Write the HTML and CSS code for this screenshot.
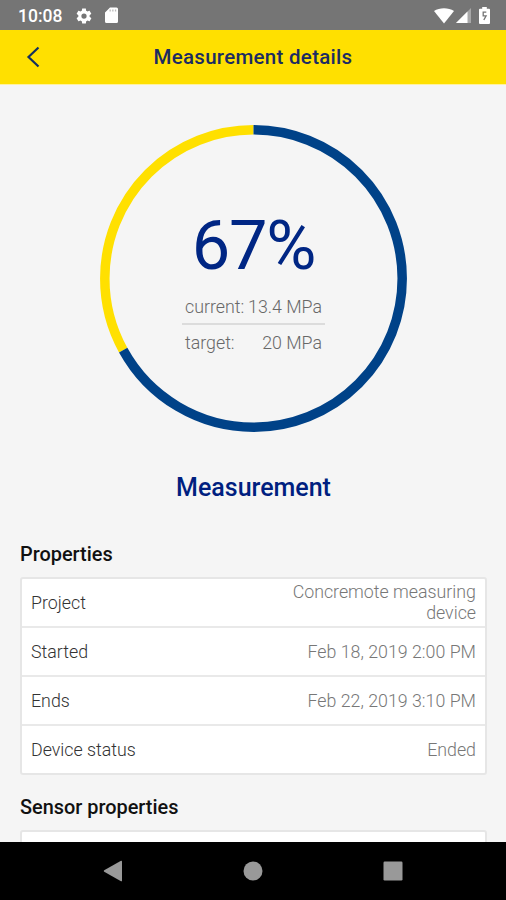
FILE: index.html
```html
<!DOCTYPE html>
<html lang="en">
<head>
<meta charset="utf-8">
<title>Measurement details</title>
<link rel="stylesheet" href="styles.css">
</head>
<body>
	<div id="screen">
		<div class="status-bar">
			<span class="clock">10:08</span>
			<svg class="gear" width="18" height="18" viewBox="0 0 24 24"><path fill="#fff" d="M19.4 13c0-.3.1-.6.1-1s0-.7-.1-1l2.1-1.600c.2-.2.300-.4.100-.7l-2-3.400c-.1-.2-.4-.3-.6-.2l-2.500 1c-.5-.4-1.100-.7-1.700-1L14.500 2.400c0-.2-.2-.4-.5-.4h-4c-.3 0-.5.2-.5.4l-.4 2.700c-.6.2-1.100.6-1.700 1l-2.500-1c-.2-.1-.5 0-.6.2l-2 3.400c-.1.2-.1.500.1.700L4.500 11c0 .3-.1.600-.1 1s0 .7.1 1l-2.100 1.600c-.2.2-.2.4-.1.700l2 3.400c.1.200.4.300.6.200l2.500-1c.5.4 1.100.7 1.700 1l.4 2.700c0 .2.200.4.500.4h4c.3 0 .5-.2.5-.4l.4-2.700c.6-.3 1.100-.6 1.700-1l2.500 1c.2.100.5 0 .6-.2l2-3.400c.1-.2.100-.5-.1-.7zM12 15.500a3.500 3.500 0 1 1 0-7 3.500 3.500 0 0 1 0 7z"/></svg>
			<svg class="card-icon" width="15" height="17" viewBox="0 0 15 17"><path fill="#fff" fill-rule="evenodd" d="M6 .5h6.500A1.500 1.500 0 0 1 14 2v12.500a1.500 1.500 0 0 1-1.500 1.500h-10A1.500 1.500 0 0 1 1 14.500V5.500z"/><path fill="#bbb" d="M5.500 2.500v2h1.300v-2zM8.200 2.500v2h1.300v-2zM10.900 2.500v2h1.300v-2z"/></svg>
			<svg class="wifi" width="20" height="16" viewBox="0 0 20 16"><path fill="#fff" d="M0 3C5.500-.8 14.500-.8 20 3L10 15.500z"/></svg>
			<svg class="signal" width="15" height="15" viewBox="0 0 15 15"><path fill="#a8a8a8" d="M15 0v15H0z"/><path fill="#fff" d="M11.500 3.500V15H0z"/></svg>
			<svg class="battery" width="11" height="17" viewBox="0 0 11 17"><path fill="#fff" d="M3.200 0h4.600v1.800H10a1 1 0 0 1 1 1V16a1 1 0 0 1-1 1H1a1 1 0 0 1-1-1V2.800a1 1 0 0 1 1-1h2.200z"/><path fill="none" stroke="#757575" stroke-width="1.300" d="M7.300 5.200H4.200v3.600h2.900L4.800 13"/></svg>
		</div>
		<div class="header">
			<svg class="back" width="14" height="22" viewBox="0 0 14 22"><path fill="none" stroke="#14305f" stroke-width="2.200" d="M12.500 1.500L2.500 11l10 9.500"/></svg>
			<h1>Measurement details</h1>
		</div>
		<div class="content">
			<div class="progress">
				<svg class="ring" width="308" height="308" viewBox="0 0 308 308">
					<circle cx="153.500" cy="154.500" r="148.700" fill="none" stroke="#ffe000" stroke-width="9.500" pathLength="100" stroke-dasharray="33 67" stroke-dashoffset="-67" transform="rotate(-90 153.500 154.500)"/>
					<circle cx="153.500" cy="154.500" r="148.700" fill="none" stroke="#004288" stroke-width="9.500" pathLength="100" stroke-dasharray="67 33" transform="rotate(-90 153.500 154.500)"/>
				</svg>
				<div class="percent">67%</div>
				<div class="values">
					<div class="value"><span>current:</span><span>13.4 MPa</span></div>
					<div class="value"><span>target:</span><span>20 MPa</span></div>
				</div>
			</div>
			<h2>Measurement</h2>
			<h3>Properties</h3>
			<div class="list">
				<div class="row"><span class="label">Project</span><span class="data">Concremote measuring device</span></div>
				<div class="row"><span class="label">Started</span><span class="data">Feb 18, 2019 2:00 PM</span></div>
				<div class="row"><span class="label">Ends</span><span class="data">Feb 22, 2019 3:10 PM</span></div>
				<div class="row"><span class="label">Device status</span><span class="data">Ended</span></div>
			</div>
			<h3>Sensor properties</h3>
			<div class="list">
				<div class="row"></div>
			</div>
		</div>
		<div class="nav-bar">
			<svg width="20" height="22" viewBox="0 0 20 22"><path fill="#999" d="M18 .8q1-.4 1 .8v18.800q0 1.200-1 .8L1.200 11.700q-1-.7 0-1.400z"/></svg>
			<svg width="20" height="20" viewBox="0 0 20 20"><circle cx="10" cy="10" r="9.500" fill="#999"/></svg>
			<svg width="20" height="20" viewBox="0 0 20 20"><rect x=".5" y=".5" width="19" height="19" rx="1.200" fill="#999"/></svg>
		</div>
	</div>
</body>
</html>
```

FILE: styles.css
```css
body {
	margin: 0;
	font-family: Roboto, sans-serif;
}
#screen {
	width: 506px;
	height: 900px;
	display: flex;
	flex-direction: column;
	overflow: hidden;
	background: #f5f5f5;
}
.status-bar {
	flex: none;
	box-sizing: border-box;
	height: 30px;
	padding: 1px 16px 0 18px;
	display: flex;
	align-items: center;
	background: #757575;
}
.clock {
	width: 57px;
	color: #fff;
	font-size: 17.5px;
	font-weight: 500;
}
.card-icon {
	margin-left: 11px;
}
.wifi {
	margin-left: auto;
}
.signal {
	margin-left: 2px;
}
.battery {
	margin-left: 8px;
}
.header {
	flex: none;
	height: 54px;
	padding: 0 26px;
	display: grid;
	grid-template-columns: 14px 1fr 14px;
	align-items: center;
	background: #ffe000;
	border-bottom: 1px solid #fff2a0;
}
.header h1 {
	margin: 0;
	text-align: center;
	color: #1c2c62;
	font-size: 20.5px;
	font-weight: 500;
	letter-spacing: 0.28px;
}
.content {
	flex: 1;
	min-height: 0;
	padding: 39px 19px 0 20px;
	overflow: hidden;
}
.progress {
	width: 308px;
	height: 308px;
	margin: 0 auto;
	display: grid;
	grid-template-rows: 164px 1fr;
	justify-items: center;
}
/* ring sits behind the numbers */
.ring {
	grid-area: 1 / 1 / 3 / 2;
}
.percent {
	grid-area: 1 / 1;
	align-self: end;
	line-height: 84px;
	color: #002684;
	font-size: 68.5px;
	letter-spacing: -1.2px;
}
.values {
	grid-area: 2 / 1;
	width: 143px;
}
.value {
	height: 35px;
	padding: 1px 3px 0;
	box-sizing: border-box;
	display: flex;
	justify-content: space-between;
	align-items: center;
	color: #686868;
	font-size: 17.8px;
	font-weight: 300;
}
.value + .value {
	height: 36px;
	border-top: 2px solid #dcdcdc;
}
h2 {
	margin: 40px 0 0;
	line-height: 32px;
	text-align: center;
	color: #001f80;
	font-size: 25px;
	font-weight: 500;
}
h3 {
	margin: 0;
	line-height: 24px;
	color: #111;
	font-size: 19.9px;
	font-weight: 500;
}
h2 + h3 {
	margin-top: 39px;
}
.list {
	margin-top: 10px;
	background: #fff;
	border: 2px solid #e6e6e6;
	border-radius: 3px;
}
.list + h3 {
	margin-top: 21px;
}
.row {
	height: 47px;
	padding: 0 9px 1px;
	box-sizing: border-box;
	display: flex;
	justify-content: space-between;
	align-items: center;
	font-size: 17.8px;
	font-weight: 300;
	line-height: 21px;
}
.row + .row {
	height: 49px;
	border-top: 2px solid #e9e9e9;
}
.label {
	color: #333;
}
.data {
	max-width: 210px;
	text-align: right;
	color: #777;
}
.nav-bar {
	flex: none;
	height: 58px;
	padding: 0 103px;
	display: flex;
	justify-content: space-between;
	align-items: center;
	background: #000;
}
```
